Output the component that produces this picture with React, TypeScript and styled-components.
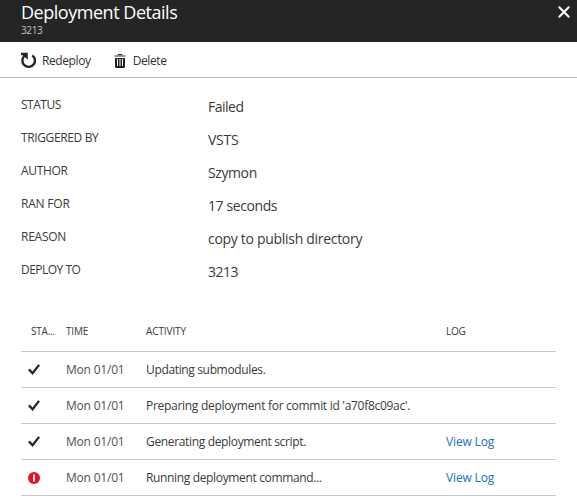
import React from "react";
import styled, { createGlobalStyle } from "styled-components";

const GlobalStyle = createGlobalStyle`
  * { box-sizing: border-box; }
  body {
    margin: 0;
    background: #fff;
    color: #3a3a3a;
    font-family: "Open Sans", "Segoe UI", sans-serif;
    overflow: hidden;
  }
`;

/* Text run whose tracking is given in px. */
const Text = styled.span<{ $track?: number }>`
  letter-spacing: ${(p) => p.$track ?? 0}px;
  white-space: nowrap;
`;

const Blade = styled.main`
  width: 577px;
  height: 503px;
  background: #fff;
  overflow: hidden;
`;

const Header = styled.header`
  display: flex;
  justify-content: space-between;
  height: 42px;
  padding: 0 7px 0 21px;
  background: #252525;
  color: #fff;
`;

const Title = styled.h1`
  margin: 0;
  font-size: 18px;
  font-weight: 400;
  line-height: 25px;
`;

const Subtitle = styled.div`
  color: #c4c4c4;
  font-size: 10px;
  line-height: 11px;
`;

const CloseButton = styled.button`
  display: flex;
  width: 12px;
  height: 12px;
  margin: 6px 0 0;
  padding: 0;
  border: 0;
  background: none;
`;

const Toolbar = styled.nav`
  display: flex;
  align-items: center;
  gap: 23px;
  height: 36px;
  padding: 2px 0 0 20px;
  border-bottom: 1px solid #bababa;
`;

const Command = styled.button<{ $gap: number }>`
  display: flex;
  align-items: center;
  gap: ${(p) => p.$gap}px;
  padding: 0;
  border: 0;
  background: none;
  color: #333;
  font: inherit;
  font-size: 12px;
  line-height: 18px;
`;

const Details = styled.dl`
  margin: 17px 0 0;
  padding-left: 21px;
`;

const Detail = styled.div`
  display: grid;
  grid-template-columns: 187px 1fr;
  height: 33px;
`;

const Label = styled.dt`
  font-size: 12px;
  line-height: 19px;
`;

const Value = styled.dd`
  margin: 2px 0 0;
  font-size: 14px;
  line-height: 20px;
`;

const Table = styled.section`
  margin: 19px 21px 0;
`;

const Row = styled.div`
  display: grid;
  grid-template-columns: 45px 80px 300px 1fr;
  align-items: center;
  height: 36px;
  border-bottom: 1px solid #c8c8c8;
  font-size: 12px;
`;

const HeadRow = styled(Row)`
  height: 40px;
  padding-bottom: 2px;
  font-size: 10px;
`;

const StatusCell = styled.div<{ $inset: number }>`
  display: flex;
  padding-left: ${(p) => p.$inset}px;
`;

const TimeCell = styled(Text)`
  color: #505050;
`;

const Link = styled.a`
  color: #1b6ec2;
  text-decoration: none;
  letter-spacing: -0.15px;
`;

const CloseIcon = () => (
  <svg width="12" height="12" viewBox="0 0 12 12">
    <path d="M.8.8l10.4 10.4M11.2.8L.8 11.2" stroke="#fff" strokeWidth="2" />
  </svg>
);

const RedeployIcon = () => (
  <svg width="17" height="17" viewBox="0 0 17 17">
    <path d="M12.3 3.4A6.3 6.3 0 1 1 4.3 4" fill="none" stroke="#252525" strokeWidth="2.4" />
    <path d="M1 .7H7.8V7.6L5.4 5.6 3.4 4.1Q2.4 3.2 1 3z" fill="#252525" />
  </svg>
);

const TrashIcon = () => (
  <svg width="12" height="14" viewBox="0 0 12 14">
    <path d="M4 1.5V.5h4v1" fill="none" stroke="#333" />
    <path d="M.5 2h11" stroke="#333" />
    <path d="M1 4h10v8.6q0 1.4-1.4 1.4H2.4Q1 14 1 12.6z" fill="#252525" />
    <path d="M3.5 5v7M6 5v7M8.5 5v7" stroke="#fff" strokeWidth="1" />
  </svg>
);

const CheckIcon = () => (
  <svg width="12" height="11" viewBox="0 0 12 11">
    <path d="M.9 5.4l3.7 3.8L11.1.9" fill="none" stroke="#252525" strokeWidth="2.3" />
  </svg>
);

const ErrorIcon = () => (
  <svg width="12" height="12" viewBox="0 0 12 12">
    <circle cx="6" cy="6" r="6" fill="#e81123" />
    <path d="M6 2.5v7" stroke="#fff" strokeWidth="1.8" />
  </svg>
);

const details: { label: string; labelTrack: number; value: string; valueTrack: number }[] = [
  { label: "STATUS", labelTrack: -0.5, value: "Failed", valueTrack: -0.5 },
  { label: "TRIGGERED BY", labelTrack: -0.37, value: "VSTS", valueTrack: -0.25 },
  { label: "AUTHOR", labelTrack: -0.32, value: "Szymon", valueTrack: -0.4 },
  { label: "RAN FOR", labelTrack: -0.2, value: "17 seconds", valueTrack: -0.4 },
  { label: "REASON", labelTrack: -0.25, value: "copy to publish directory", valueTrack: -0.3 },
  { label: "DEPLOY TO", labelTrack: -0.52, value: "3213", valueTrack: -0.5 },
];

const activities: { ok: boolean; text: string; track: number; log: boolean }[] = [
  { ok: true, text: "Updating submodules.", track: -0.35, log: false },
  { ok: true, text: "Preparing deployment for commit id 'a70f8c09ac'.", track: -0.29, log: false },
  { ok: true, text: "Generating deployment script.", track: -0.34, log: true },
  { ok: false, text: "Running deployment command...", track: -0.35, log: true },
];

export default function App() {
  return (
    <Blade>
      <GlobalStyle />
      <Header>
        <div>
          <Title><Text $track={-0.47}>Deployment Details</Text></Title>
          <Subtitle><Text $track={-0.35}>3213</Text></Subtitle>
        </div>
        <CloseButton aria-label="Close"><CloseIcon /></CloseButton>
      </Header>
      <Toolbar>
        <Command $gap={5}><RedeployIcon /><Text $track={-0.4}>Redeploy</Text></Command>
        <Command $gap={7}><TrashIcon /><Text $track={-0.4}>Delete</Text></Command>
      </Toolbar>
      <Details>
        {details.map((d) => (
          <Detail key={d.label}>
            <Label><Text $track={d.labelTrack}>{d.label}</Text></Label>
            <Value><Text $track={d.valueTrack}>{d.value}</Text></Value>
          </Detail>
        ))}
      </Details>
      <Table>
        <HeadRow>
          <StatusCell $inset={10}><Text $track={-0.2}>STA...</Text></StatusCell>
          <Text $track={-0.15}>TIME</Text>
          <Text $track={-0.1}>ACTIVITY</Text>
          <Text $track={-0.3}>LOG</Text>
        </HeadRow>
        {activities.map((a) => (
          <Row key={a.text}>
            <StatusCell $inset={7}>{a.ok ? <CheckIcon /> : <ErrorIcon />}</StatusCell>
            <TimeCell $track={-0.2}>Mon 01/01</TimeCell>
            <Text $track={a.track}>{a.text}</Text>
            {a.log && <Link>View Log</Link>}
          </Row>
        ))}
      </Table>
    </Blade>
  );
}
